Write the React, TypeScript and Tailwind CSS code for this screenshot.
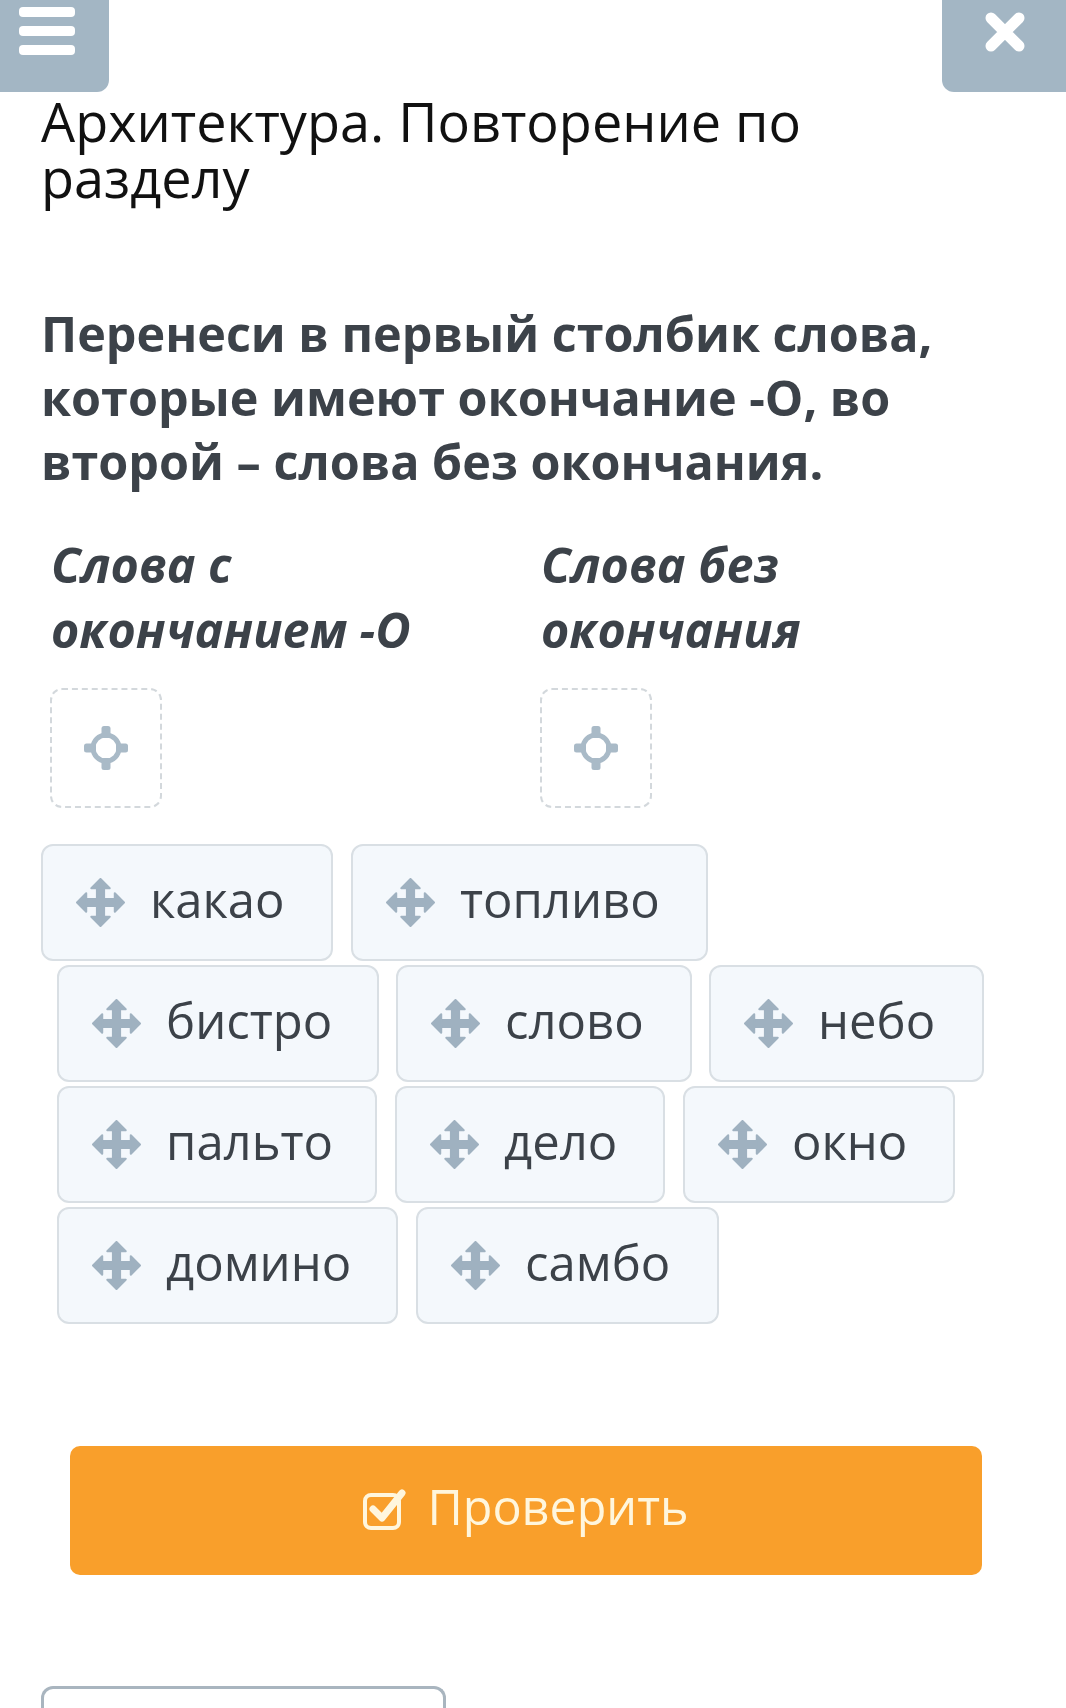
import React from "react"

const font = { fontFamily: '"Open Sans", "Liberation Sans", sans-serif' }

function MoveIcon() {
  return (
    <svg width="49" height="49" viewBox="0 0 48 48" className="shrink-0">
      <g fill="#9fb1c0" stroke="#9fb1c0" strokeWidth="2" strokeLinejoin="round">
        <rect x="20.5" y="7" width="7" height="34" />
        <rect x="7" y="20.5" width="34" height="7" />
        <polygon points="24,1 33,10 15,10" />
        <polygon points="24,47 33,38 15,38" />
        <polygon points="1,24 10,15 10,33" />
        <polygon points="47,24 38,15 38,33" />
      </g>
    </svg>
  )
}

function TargetIcon() {
  return (
    <svg width="44" height="44" viewBox="0 0 44 44">
      <circle cx="22" cy="22" r="13" fill="none" stroke="#a9bac7" strokeWidth="5" />
      <rect x="17.5" y="0" width="9" height="12" rx="2.5" fill="#a9bac7" />
      <rect x="17.5" y="32" width="9" height="12" rx="2.5" fill="#a9bac7" />
      <rect x="0" y="17.5" width="12" height="9" rx="2.5" fill="#a9bac7" />
      <rect x="32" y="17.5" width="12" height="9" rx="2.5" fill="#a9bac7" />
    </svg>
  )
}

function DropZone() {
  return (
    <div className="w-[112px] h-[120px] rounded-[12px] border-2 border-dashed border-[#d3d8dc] flex items-center justify-center">
      <TargetIcon />
    </div>
  )
}

function WordCard({ word, w }: { word: string; w: string }) {
  return (
    <div
      className={`${w} h-[117px] shrink-0 rounded-[12px] border-2 border-[#d9dfe4] bg-[#f4f8fc] flex items-center pl-[33px] gap-[25px]`}
    >
      <MoveIcon />
      <span className="text-[49px] leading-none text-[#3c4249] whitespace-nowrap pb-[6px]">{word}</span>
    </div>
  )
}

export default function App() {
  return (
    <div className="w-[1066px] h-[1708px] overflow-hidden bg-white" style={font}>
      <div className="flex justify-between items-start">
        <div className="w-[109px] h-[92px] bg-[#a3b6c4] rounded-br-[12px] flex flex-col gap-[9px] pl-[19px] pt-[7px]">
          <div className="w-[56px] h-[10px] rounded-[4px] bg-white" />
          <div className="w-[56px] h-[10px] rounded-[4px] bg-white" />
          <div className="w-[56px] h-[10px] rounded-[4px] bg-white" />
        </div>
        <div className="w-[124px] h-[92px] bg-[#a3b6c4] rounded-bl-[12px] flex items-start justify-center pt-[10px] pl-[2px]">
          <svg width="44" height="44" viewBox="0 0 44 44">
            <path d="M8 8 L36 36 M36 8 L8 36" stroke="white" strokeWidth="11" strokeLinecap="round" />
          </svg>
        </div>
      </div>

      <h1 className="mt-[1px] pl-[41px] text-[54px] leading-[56px] text-[#111] font-normal whitespace-nowrap">
        Архитектура. Повторение по
        <br />
        разделу
      </h1>

      <p className="mt-[96px] pl-[41px] text-[48.5px] leading-[64px] font-bold text-[#3c4249] whitespace-nowrap">
        Перенеси в первый столбик слова,
        <br />
        которые имеют окончание -О, во
        <br />
        второй – слова без окончания.
      </p>

      <div className="mt-[39px] flex pl-[51px]">
        <div className="w-[490px] flex flex-col">
          <div className="text-[48.5px] leading-[65px] font-bold italic text-[#3c4249] whitespace-nowrap">
            Слова с
            <br />
            окончанием -О
          </div>
          <div className="mt-[26px] -ml-[1px]">
            <DropZone />
          </div>
        </div>
        <div className="flex flex-col">
          <div className="text-[48.5px] leading-[65px] font-bold italic text-[#3c4249] whitespace-nowrap">
            Слова без
            <br />
            окончания
          </div>
          <div className="mt-[26px] -ml-[1px]">
            <DropZone />
          </div>
        </div>
      </div>

      <div className="mt-[36px] flex flex-col gap-[4px]">
        <div className="flex gap-[18px] pl-[41px]">
          <WordCard word="какао" w="w-[292px]" />
          <WordCard word="топливо" w="w-[357px]" />
        </div>
        <div className="flex gap-[17px] pl-[57px]">
          <WordCard word="бистро" w="w-[322px]" />
          <WordCard word="слово" w="w-[296px]" />
          <WordCard word="небо" w="w-[275px]" />
        </div>
        <div className="flex gap-[18px] pl-[57px]">
          <WordCard word="пальто" w="w-[320px]" />
          <WordCard word="дело" w="w-[270px]" />
          <WordCard word="окно" w="w-[272px]" />
        </div>
        <div className="flex gap-[18px] pl-[57px]">
          <WordCard word="домино" w="w-[341px]" />
          <WordCard word="самбо" w="w-[303px]" />
        </div>
      </div>

      <div className="mt-[122px] px-[70px] pr-[84px]">
        <button className="w-full h-[129px] rounded-[10px] bg-[#f99f2b] flex items-center justify-center gap-[18px] pb-[4px]">
          <svg width="46" height="44" viewBox="0 0 46 44">
            <rect x="2" y="8" width="34" height="33" rx="6" fill="none" stroke="#fff6dd" strokeWidth="4" />
            <path d="M10 22 L19 31 L39 6" fill="none" stroke="#fff6dd" strokeWidth="7" strokeLinecap="round" strokeLinejoin="round" />
          </svg>
          <span className="text-[48.5px] leading-none text-[#fff6dd] pb-[4px]">Проверить</span>
        </button>
      </div>

      <div className="mt-[111px] ml-[41px] w-[405px] h-[60px] border-[3px] border-b-0 border-[#a9b5bf] rounded-t-[12px]" />
    </div>
  )
}
